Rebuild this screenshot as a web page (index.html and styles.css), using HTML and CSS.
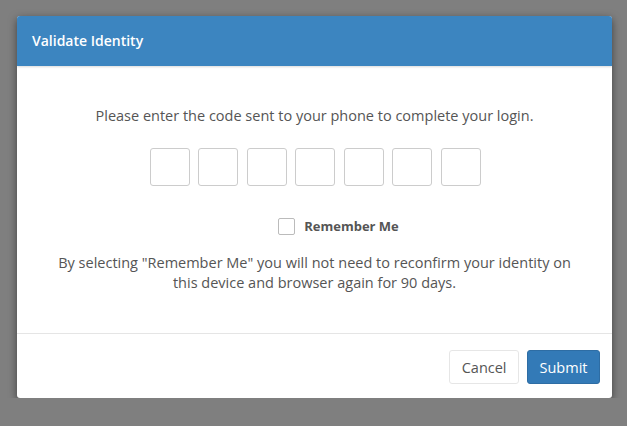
FILE: index.html
```html
<!DOCTYPE html>
<html lang="en">
<head>
    <meta charset="UTF-8">
    <title>Validate Identity</title>
    <link rel="stylesheet" href="styles.css">
</head>
<body>
    <div class="modal">
        <div class="modal-header">
            <h4>Validate Identity</h4>
        </div>
        <div class="modal-body">
            <p class="prompt">Please enter the code sent to your phone to complete your login.</p>
            <div class="code-inputs">
                <input type="text" maxlength="1">
                <input type="text" maxlength="1">
                <input type="text" maxlength="1">
                <input type="text" maxlength="1">
                <input type="text" maxlength="1">
                <input type="text" maxlength="1">
                <input type="text" maxlength="1">
            </div>
            <label class="remember">
                <span class="check"></span>
                Remember Me
            </label>
            <p class="note">By selecting "Remember Me" you will not need to reconfirm your identity on this device and browser again for 90 days.</p>
        </div>
        <div class="modal-footer">
            <button class="btn btn-default">Cancel</button>
            <button class="btn btn-primary">Submit</button>
        </div>
    </div>
</body>
</html>
```

FILE: styles.css
```css
body {
    margin: 0;
    padding: 16px 15px 0 17px;
    background: #7f7f7f;
    font-family: "Open Sans", sans-serif;
    font-size: 14.5px;
    color: #555;
}

.modal {
    width: 595px;
    background: #fff;
    border-radius: 3px;
    box-shadow: 0 3px 9px rgba(0,0,0,0.5);
    overflow: hidden;
}

.modal-header {
    background: #3c85c0;
    height: 50px;
    padding: 0 15px;
    display: flex;
    align-items: center;
    box-shadow: 0 1px 2px rgba(0,0,0,0.15);
}

.modal-header h4 {
    margin: 0 0 1px;
    color: #fff;
    font-size: 14px;
    font-weight: 600;
}

.modal-body {
    padding: 40px 15px 40px;
    text-align: center;
    border-bottom: 1px solid #e5e5e5;
}

.prompt {
    margin: 0;
    line-height: 20px;
}

.code-inputs {
    display: flex;
    justify-content: center;
    gap: 8.5px;
    margin-top: 22px;
    padding-left: 1px;
}

.code-inputs input {
    width: 40px;
    height: 38px;
    box-sizing: border-box;
    border: 1px solid #ccc;
    border-radius: 3px;
    margin: 0;
    padding: 0;
}

.remember {
    display: flex;
    justify-content: center;
    align-items: center;
    gap: 9px;
    margin-top: 30px;
    padding-left: 48px;
    height: 20px;
    font-size: 13px;
    font-weight: 700;
    color: #555;
}

.check {
    width: 15px;
    height: 15px;
    border: 1px solid #bbb;
    border-radius: 2px;
    background: #fff;
}

.note {
    margin: 17px 0 0;
    padding: 0 20px;
    line-height: 20px;
}

.modal-footer {
    display: flex;
    justify-content: flex-end;
    gap: 8px;
    padding: 16px 12px 14px;
}

.btn {
    font-family: "Open Sans", sans-serif;
    font-size: 14.5px;
    height: 34px;
    padding: 0 11.5px;
    border-radius: 3px;
    cursor: pointer;
}

.btn-default {
    background: #fff;
    border: 1px solid #e6e6e6;
    color: #555;
}

.btn-primary {
    background: #337ab7;
    border: 1px solid #2e6da4;
    color: #fff;
}
```
